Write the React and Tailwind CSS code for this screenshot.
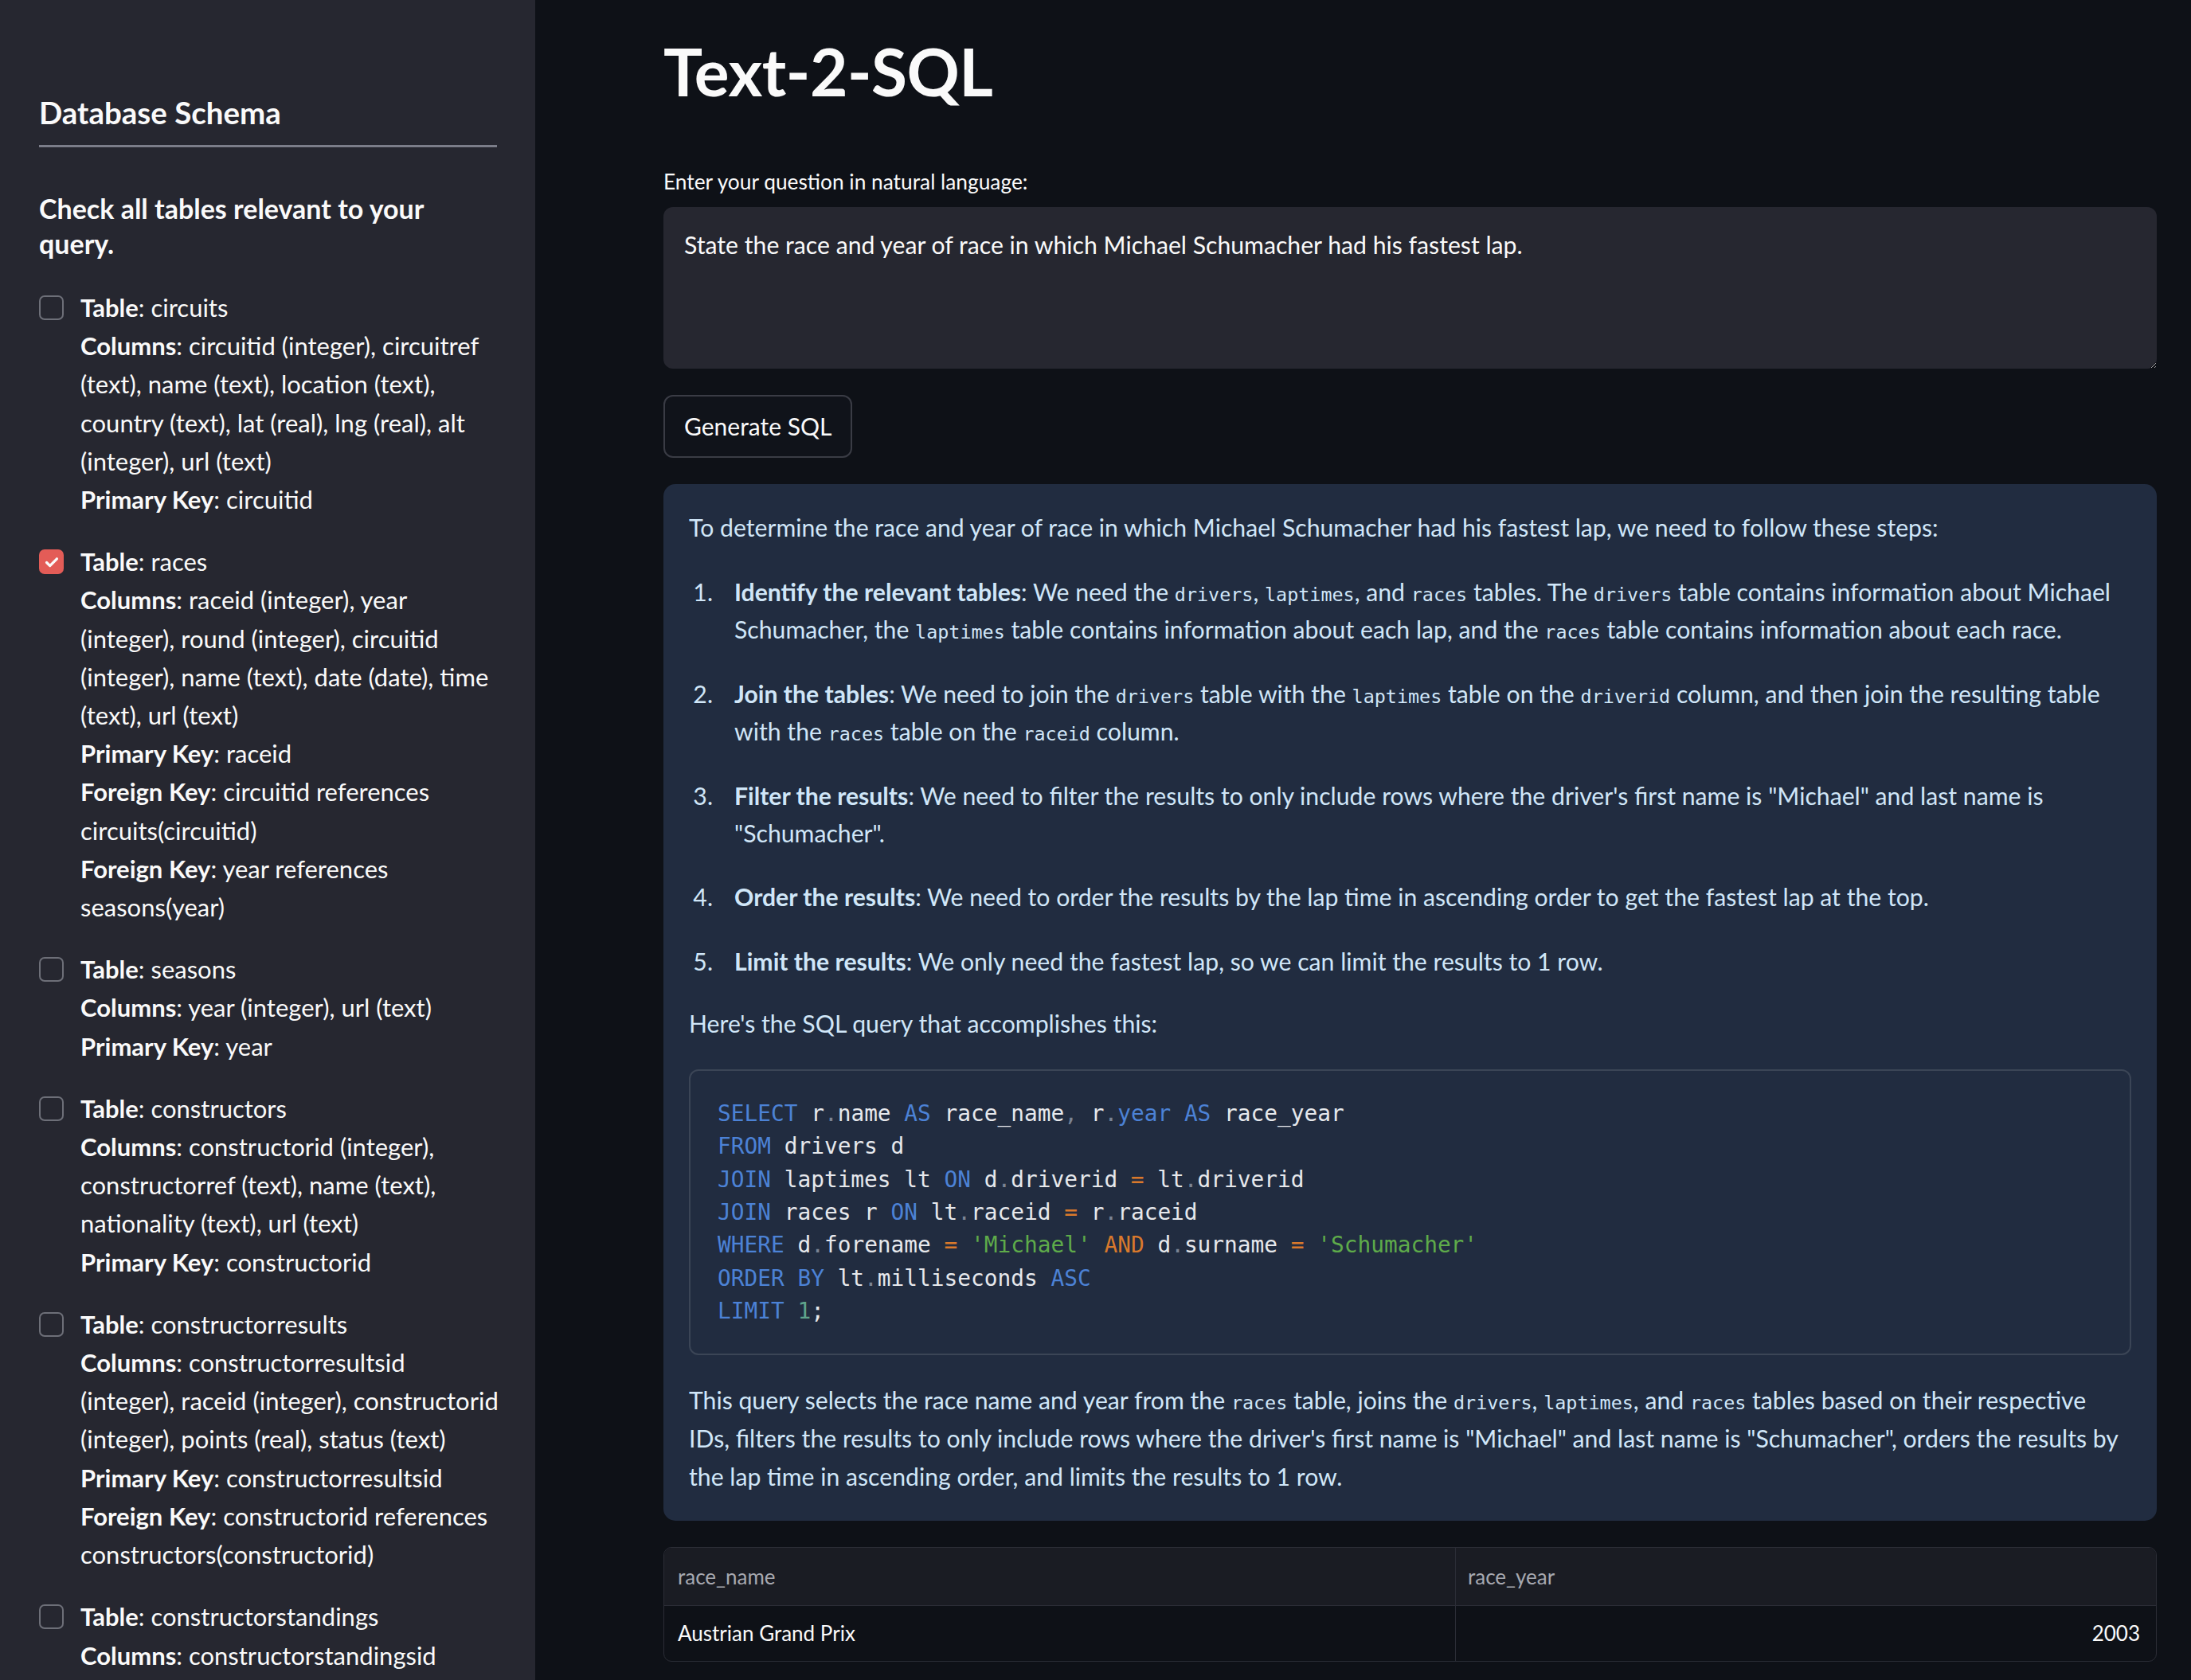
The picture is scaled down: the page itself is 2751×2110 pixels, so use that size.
import { useState } from "react";

const tables = [
  {
    name: "circuits",
    rows: [
      ["Columns", "circuitid (integer), circuitref (text), name (text), location (text), country (text), lat (real), lng (real), alt (integer), url (text)"],
      ["Primary Key", "circuitid"],
    ],
  },
  {
    name: "races",
    checked: true,
    rows: [
      ["Columns", "raceid (integer), year (integer), round (integer), circuitid (integer), name (text), date (date), time (text), url (text)"],
      ["Primary Key", "raceid"],
      ["Foreign Key", "circuitid references circuits(circuitid)"],
      ["Foreign Key", "year references seasons(year)"],
    ],
  },
  {
    name: "seasons",
    rows: [
      ["Columns", "year (integer), url (text)"],
      ["Primary Key", "year"],
    ],
  },
  {
    name: "constructors",
    rows: [
      ["Columns", "constructorid (integer), constructorref (text), name (text), nationality (text), url (text)"],
      ["Primary Key", "constructorid"],
    ],
  },
  {
    name: "constructorresults",
    rows: [
      ["Columns", "constructorresultsid (integer), raceid (integer), constructorid (integer), points (real), status (text)"],
      ["Primary Key", "constructorresultsid"],
      ["Foreign Key", "constructorid references constructors(constructorid)"],
    ],
  },
  {
    name: "constructorstandings",
    rows: [
      ["Columns", "constructorstandingsid (integer), raceid (integer), constructorid (integer), points (real), position (integer), wins (integer)"],
      ["Primary Key", "constructorstandingsid"],
    ],
  },
];

const tokenColors = {
  kw: "text-[#4c82d6]",
  op: "text-[#d9792c]",
  str: "text-[#5eab4a]",
  num: "text-[#5fa38c]",
  p: "text-[#7b8494]",
  id: "text-[#e6e8ec]",
};

const sqlLines = [
  [["SELECT", "kw"], [" r", "id"], [".", "p"], ["name ", "id"], ["AS", "kw"], [" race_name", "id"], [",", "p"], [" r", "id"], [".", "p"], ["year", "kw"], [" ", "id"], ["AS", "kw"], [" race_year", "id"]],
  [["FROM", "kw"], [" drivers d", "id"]],
  [["JOIN", "kw"], [" laptimes lt ", "id"], ["ON", "kw"], [" d", "id"], [".", "p"], ["driverid ", "id"], ["=", "op"], [" lt", "id"], [".", "p"], ["driverid", "id"]],
  [["JOIN", "kw"], [" races r ", "id"], ["ON", "kw"], [" lt", "id"], [".", "p"], ["raceid ", "id"], ["=", "op"], [" r", "id"], [".", "p"], ["raceid", "id"]],
  [["WHERE", "kw"], [" d", "id"], [".", "p"], ["forename ", "id"], ["=", "op"], [" ", "id"], ["'Michael'", "str"], [" ", "id"], ["AND", "op"], [" d", "id"], [".", "p"], ["surname ", "id"], ["=", "op"], [" ", "id"], ["'Schumacher'", "str"]],
  [["ORDER BY", "kw"], [" lt", "id"], [".", "p"], ["milliseconds ", "id"], ["ASC", "kw"]],
  [["LIMIT", "kw"], [" ", "id"], ["1", "num"], [";", "id"]],
];

// inline code keeps a tiny line-height so it doesn't stretch the 48px lines
function Code({ children }) {
  return <code className="font-['DejaVu_Sans_Mono',monospace] text-[23.4px] leading-none">{children}</code>;
}

function Checkbox({ checked }) {
  if (checked) {
    return (
      <span className="mt-[9px] flex h-[31px] w-[31px] shrink-0 items-center justify-center rounded-[7px] bg-[#e35c57]">
        <svg viewBox="0 0 24 24" className="h-[22px] w-[22px]" fill="none" stroke="#fafafa" strokeWidth="3.6" strokeLinecap="round" strokeLinejoin="round">
          <path d="M5 12.5l4.5 4.5L19 7.5" />
        </svg>
      </span>
    );
  }
  return <span className="mt-[9px] h-[31px] w-[31px] shrink-0 rounded-[7px] border-2 border-[#6d6f78]" />;
}

function Sidebar() {
  return (
    <aside className="w-[672px] shrink-0 overflow-hidden bg-[#262730] pl-[49px] pr-[40px] pt-[119px] text-[#fafafa]">
      <h2 className="mr-[8px] border-b-[3px] border-[#7b7d89] pb-[18px] text-[38.5px] font-bold leading-[45px]">Database Schema</h2>
      <p className="mt-[55px] text-[34px] font-bold leading-[44px]">Check all tables relevant to your query.</p>
      <div className="mt-[34px] flex flex-col gap-[30px]">
        {tables.map((t) => (
          <div key={t.name} className="flex gap-[21px]">
            <Checkbox checked={t.checked} />
            <div className="text-[31px] leading-[48.2px]">
              <div>
                <span className="font-bold">Table</span>: {t.name}
              </div>
              {t.rows.map(([k, v], i) => (
                <div key={i}>
                  <span className="font-bold">{k}</span>: {v}
                </div>
              ))}
            </div>
          </div>
        ))}
      </div>
    </aside>
  );
}

const steps = [
  [
    "Identify the relevant tables",
    <>
      We need the <Code>drivers</Code>, <Code>laptimes</Code>, and <Code>races</Code> tables. The <Code>drivers</Code> table contains information about Michael Schumacher, the <Code>laptimes</Code> table contains information about each lap, and the <Code>races</Code> table contains information about each race.
    </>,
  ],
  [
    "Join the tables",
    <>
      We need to join the <Code>drivers</Code> table with the <Code>laptimes</Code> table on the <Code>driverid</Code> column, and then join the resulting table with the <Code>races</Code> table on the <Code>raceid</Code> column.
    </>,
  ],
  ["Filter the results", <>We need to filter the results to only include rows where the driver's first name is "Michael" and last name is "Schumacher".</>],
  ["Order the results", <>We need to order the results by the lap time in ascending order to get the fastest lap at the top.</>],
  ["Limit the results", <>We only need the fastest lap, so we can limit the results to 1 row.</>],
];

export default function App() {
  const [question, setQuestion] = useState("State the race and year of race in which Michael Schumacher had his fastest lap.");

  return (
    <div className="flex h-[2110px] w-[2751px] overflow-hidden bg-[#0e1117] font-['Lato',sans-serif] text-[#fafafa]">
      <Sidebar />
      <main className="flex-1 pl-[161px] pr-[43px] pt-[40px]">
        <h1 className="text-[82px] font-bold leading-[98px] tracking-[-0.5px]">Text-2-SQL</h1>

        <label className="mt-[74px] block text-[26.3px] leading-[32px]">Enter your question in natural language:</label>
        <textarea
          value={question}
          onChange={(e) => setQuestion(e.target.value)}
          className="mt-[16px] block h-[203px] w-full rounded-[12px] bg-[#262730] px-[26px] pt-[23px] text-[30.2px] leading-[48px] text-[#fafafa] outline-none"
        />

        <button className="mt-[33px] h-[79px] rounded-[12px] border-2 border-[#3a3c45] bg-[#10131a] px-[24px] text-[30px] text-[#fafafa]">
          Generate SQL
        </button>

        <div className="mt-[33px] rounded-[15px] bg-[#212c40] px-[32px] pb-[32px] pt-[31px] text-[30.2px] leading-[47.7px] text-[#d0e6f8]">
          <p>To determine the race and year of race in which Michael Schumacher had his fastest lap, we need to follow these steps:</p>
          <ol className="mt-[33px] flex flex-col gap-[32.5px]">
            {steps.map(([title, body], i) => (
              <li key={i} className="flex">
                <span className="w-[57px] shrink-0 pr-[27px] text-right">{i + 1}.</span>
                <span>
                  <strong className="font-bold">{title}</strong>: {body}
                </span>
              </li>
            ))}
          </ol>
          <p className="mt-[31px]">Here's the SQL query that accomplishes this:</p>
          <pre className="mt-[33px] rounded-[12px] border-2 border-[#3b4556] px-[34px] py-[33px] font-['DejaVu_Sans_Mono',monospace] text-[27.8px] leading-[41.3px]">
            {sqlLines.map((line, i) => (
              <div key={i}>
                {line.map(([txt, kind], j) => (
                  <span key={j} className={tokenColors[kind]}>
                    {txt}
                  </span>
                ))}
              </div>
            ))}
          </pre>
          <p className="mt-[33px]">
            This query selects the race name and year from the <Code>races</Code> table, joins the <Code>drivers</Code>, <Code>laptimes</Code>, and <Code>races</Code> tables based on their respective IDs, filters the results to only include rows where the driver's first name is "Michael" and last name is "Schumacher", orders the results by the lap time in ascending order, and limits the results to 1 row.
          </p>
        </div>

        <div className="mt-[33px] overflow-hidden rounded-[10px] border border-[#2b2d36] text-[26px]">
          <div className="grid h-[72px] grid-cols-[994px_1fr] bg-[#1a1c23] text-[#a6a8b0]">
            <div className="flex items-center border-r border-[#2b2d36] pl-[17px]">race_name</div>
            <div className="flex items-center pl-[15px]">race_year</div>
          </div>
          <div className="grid h-[70px] grid-cols-[994px_1fr] border-t border-[#2b2d36]">
            <div className="flex items-center border-r border-[#2b2d36] pl-[17px]">Austrian Grand Prix</div>
            <div className="flex items-center justify-end pr-[20px]">2003</div>
          </div>
        </div>
      </main>
    </div>
  );
}
